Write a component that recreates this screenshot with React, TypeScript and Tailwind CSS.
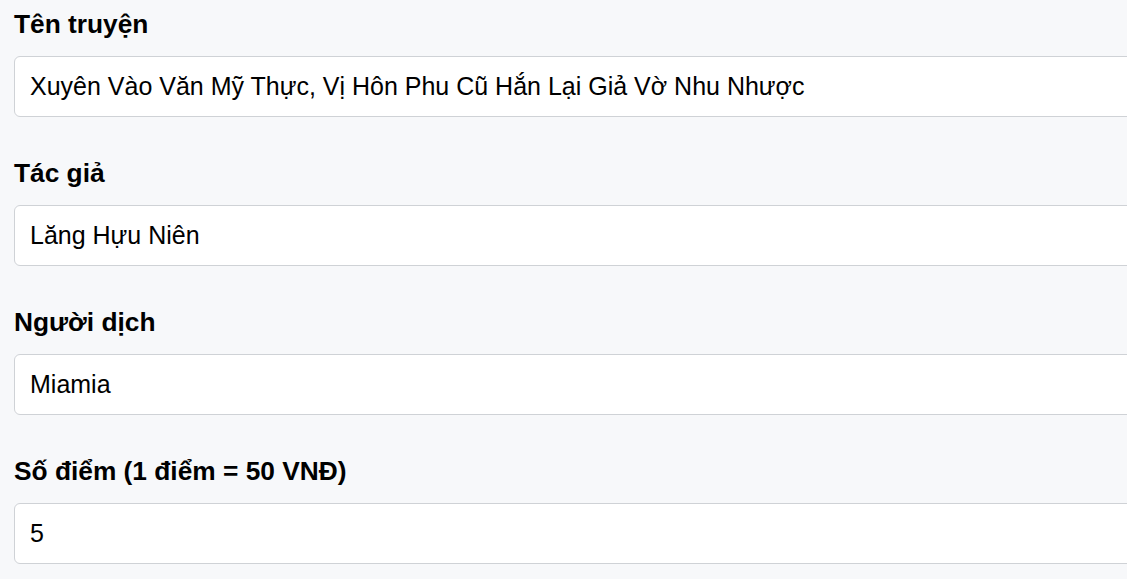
const fields = [
  { label: "Tên truyện", value: "Xuyên Vào Văn Mỹ Thực, Vị Hôn Phu Cũ Hắn Lại Giả Vờ Nhu Nhược" },
  { label: "Tác giả", value: "Lăng Hựu Niên" },
  { label: "Người dịch", value: "Miamia" },
  { label: "Số điểm (1 điểm = 50 VNĐ)", value: "5" },
]

export default function App() {
  return (
    <div className="min-h-[579px] overflow-hidden bg-[#f7f8fa] pl-[14px] pt-[9px] font-['Liberation_Sans',Arial,sans-serif] text-black">
      <form className="w-[1300px]">
        {fields.map((f) => (
          <div key={f.label} className="mb-[41px]">
            <label className="mb-[17px] block text-[26.3px] font-bold leading-[30px]">{f.label}</label>
            <input
              type="text"
              defaultValue={f.value}
              className="block h-[61px] w-full rounded-[6px] border border-[#cfd2d6] bg-white px-[15px] text-[25px] text-black outline-none"
            />
          </div>
        ))}
      </form>
    </div>
  )
}
